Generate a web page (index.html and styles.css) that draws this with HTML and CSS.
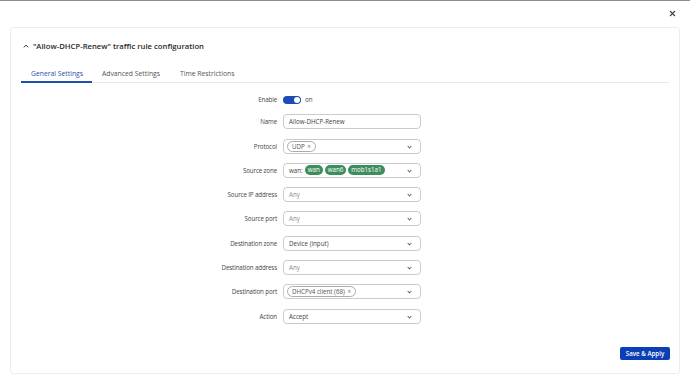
FILE: index.html
```html
<html>
	<head>
		<title>Traffic rule configuration</title>
		<link rel="stylesheet" href="styles.css">
	</head>
	<body>
		<div class="modal">
			<button class="close" title="Close">
				<svg width="7" height="7" viewBox="0 0 7 7"><path d="M1 1L6 6M6 1L1 6" stroke="#3c4250" stroke-width="1.1"/></svg>
			</button>

			<section class="panel">
				<h2 class="panel-head">
					<svg class="chev-up" width="6" height="4" viewBox="0 0 6 4"><path d="M0.8 3.3L3 1.1L5.2 3.3" fill="none" stroke="#333" stroke-width="1"/></svg>
					"Allow-DHCP-Renew" traffic rule configuration
				</h2>

				<nav class="tabs">
					<a class="tab active">General Settings</a>
					<a class="tab">Advanced Settings</a>
					<a class="tab">Time Restrictions</a>
				</nav>

				<form class="rules">
					<div class="row short">
						<label>Enable</label>
						<div class="switch-wrap"><span class="switch"><span class="knob"></span></span><span class="switch-text">on</span></div>
					</div>
					<div class="row">
						<label>Name</label>
						<div class="field"><span class="value">Allow-DHCP-Renew</span></div>
					</div>
					<div class="row">
						<label>Protocol</label>
						<div class="field select"><span class="chip">UDP <i>×</i></span></div>
					</div>
					<div class="row">
						<label>Source zone</label>
						<div class="field select">
							<span class="value">wan:</span>
							<span class="zone">wan</span><span class="zone">wan6</span><span class="zone">mob1s1a1</span>
						</div>
					</div>
					<div class="row">
						<label>Source IP address</label>
						<div class="field select"><span class="value muted">Any</span></div>
					</div>
					<div class="row">
						<label>Source port</label>
						<div class="field select"><span class="value muted">Any</span></div>
					</div>
					<div class="row">
						<label>Destination zone</label>
						<div class="field select"><span class="value">Device (input)</span></div>
					</div>
					<div class="row">
						<label>Destination address</label>
						<div class="field select"><span class="value muted">Any</span></div>
					</div>
					<div class="row">
						<label>Destination port</label>
						<div class="field select"><span class="chip">DHCPv4 client (68) <i>×</i></span></div>
					</div>
					<div class="row">
						<label>Action</label>
						<div class="field select"><span class="value">Accept</span></div>
					</div>
				</form>

				<div class="panel-foot">
					<button class="primary" type="button">Save &amp; Apply</button>
				</div>
			</section>
		</div>
	</body>
</html>
```

FILE: styles.css
```css
html, body {
	margin: 0;
	background: #fff;
}
body {
	font-family: "Open Sans", "DejaVu Sans", sans-serif;
	color: #333;
	border-top: 1px solid #8d8d8d;
}
.modal {
	position: relative;
	height: 380px;
	box-sizing: border-box;
	padding: 26px 10px 7px 10px;
}
.close {
	position: absolute;
	top: 9px;
	right: 14px;
	border: 0;
	background: none;
	padding: 0;
	width: 7px;
	height: 7px;
	line-height: 0;
}
.panel {
	height: 347px;
	box-sizing: border-box;
	border: 1px solid #ededf0;
	border-radius: 3px;
	padding: 0 10px 0 10px;
	display: flex;
	flex-direction: column;
}
.panel-head {
	margin: 12px 0 0 0;
	font-size: 7.7px;
	line-height: 12px;
	font-weight: 600;
	color: #2a2a2a;
	display: flex;
	align-items: center;
	gap: 4px;
	padding-left: 2px;
}
.tabs {
	display: flex;
	margin-top: 16px;
	border-bottom: 1px solid #e8e8ec;
}
.tab {
	font-size: 6.8px;
	line-height: 12px;
	padding: 0 10px 1px 10px;
	color: #555;
	border-bottom: 2px solid transparent;
	margin-bottom: -1px;
}
.tab.active {
	color: #1f4fae;
	border-bottom-color: #1f4fae;
	padding-right: 9px;
}
.rules {
	display: flex;
	flex-direction: column;
	gap: 9.3px;
	margin-top: 11px;
}
.row {
	display: grid;
	grid-template-columns: 256px 138px;
	column-gap: 6px;
	align-items: center;
	height: 15px;
}
.row.short {
	height: 11px;
}
.row label {
	text-align: right;
	font-size: 6.2px;
	letter-spacing: -0.12px;
	color: #444;
}
.field {
	box-sizing: border-box;
	height: 15px;
	border: 1px solid #c9cbd0;
	border-radius: 4px;
	display: flex;
	align-items: center;
	gap: 2px;
	padding: 0 5px;
	position: relative;
	font-size: 6.2px;
	color: #444;
}
.field.select::after {
	content: "";
	position: absolute;
	right: 9px;
	top: 5px;
	width: 2px;
	height: 2px;
	border-right: 0.8px solid #666;
	border-bottom: 0.8px solid #666;
	transform: rotate(45deg);
}
.muted {
	color: #8a8a8a;
}
.chip {
	border: 1px solid #a8abb0;
	border-radius: 6px;
	height: 9px;
	line-height: 9px;
	padding: 0 4px;
	font-size: 6.2px;
	color: #555;
	margin-left: -2px;
}
.chip i {
	font-style: normal;
	color: #777;
	margin-left: 1px;
}
.zone {
	background: #3d8c5c;
	color: #fff;
	border-radius: 5px;
	height: 10px;
	line-height: 10px;
	padding: 0 3px;
	font-size: 6.2px;
}
.switch-wrap {
	display: flex;
	align-items: center;
	gap: 4px;
}
.switch {
	width: 18px;
	height: 8px;
	border-radius: 4px;
	background: #1c4db3;
	display: flex;
	justify-content: flex-end;
	align-items: center;
	padding: 0 1px;
	box-sizing: border-box;
}
.knob {
	width: 6px;
	height: 6px;
	border-radius: 50%;
	background: #fff;
}
.switch-text {
	font-size: 6.2px;
	color: #444;
}
.panel-foot {
	margin-top: auto;
	display: flex;
	justify-content: flex-end;
	padding-bottom: 13px;
}
.primary {
	background: #0b3fb5;
	color: #fff;
	border: 0;
	border-radius: 2px;
	height: 13px;
	width: 50px;
	padding: 0;
	font-family: "Open Sans", sans-serif;
	font-size: 6.2px;
	font-weight: 600;
	margin-right: -1px;
}
```
